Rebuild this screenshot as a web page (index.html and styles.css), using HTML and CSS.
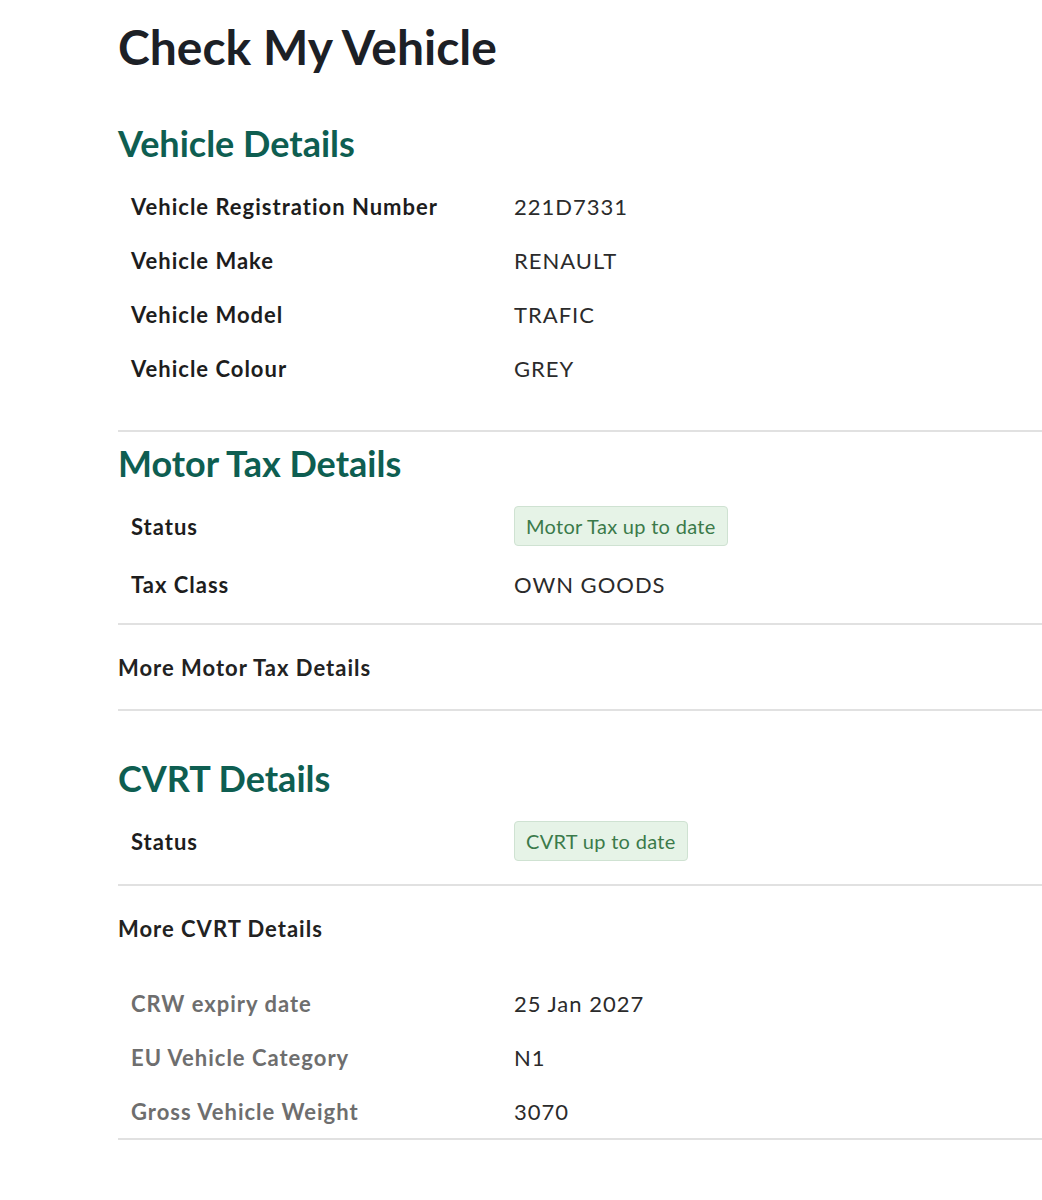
FILE: index.html
```html
<!DOCTYPE html>
<html lang="en">
<head>
  <meta charset="UTF-8">
  <meta name="viewport" content="width=device-width, initial-scale=1.0">
  <title>Check My Vehicle</title>

  <link rel="stylesheet" href="styles.css">
</head>
<body>
  <main class="page">
    <h1 class="page-title">Check My Vehicle</h1>

    <!-- 車両情報 -->
    <section class="section">
      <h2 class="section-title first">Vehicle Details</h2>
      <div class="detail-list vehicle-list">
        <div class="detail-row"><span class="label">Vehicle Registration Number</span><span class="value">221D7331</span></div>
        <div class="detail-row"><span class="label">Vehicle Make</span><span class="value">RENAULT</span></div>
        <div class="detail-row"><span class="label">Vehicle Model</span><span class="value">TRAFIC</span></div>
        <div class="detail-row"><span class="label">Vehicle Colour</span><span class="value">GREY</span></div>
      </div>
    </section>

    <div class="separator"></div>

    <!-- 自動車税 -->
    <section class="section">
      <h2 class="section-title">Motor Tax Details</h2>
      <div class="detail-list">
        <div class="detail-row status-row"><span class="label">Status</span><span class="value"><span class="badge">Motor Tax up to date</span></span></div>
        <div class="detail-row"><span class="label">Tax Class</span><span class="value">OWN GOODS</span></div>
      </div>
    </section>

    <div class="separator spaced"></div>
    <div class="more-toggle">More Motor Tax Details</div>
    <div class="separator"></div>

    <!-- CVRT -->
    <section class="section">
      <h2 class="section-title cvrt-title">CVRT Details</h2>
      <div class="detail-list">
        <div class="detail-row status-row"><span class="label">Status</span><span class="value"><span class="badge">CVRT up to date</span></span></div>
      </div>
    </section>

    <div class="separator spaced"></div>
    <div class="more-toggle">More CVRT Details</div>

    <div class="detail-list more-list">
      <div class="detail-row"><span class="label muted">CRW expiry date</span><span class="value">25 Jan 2027</span></div>
      <div class="detail-row"><span class="label muted">EU Vehicle Category</span><span class="value">N1</span></div>
      <div class="detail-row"><span class="label muted">Gross Vehicle Weight</span><span class="value">3070</span></div>
    </div>
    <div class="separator"></div>
  </main>
</body>
</html>
```

FILE: styles.css
```css
* {
  margin: 0;
  padding: 0;
  box-sizing: border-box;
}

body {
  font-family: Lato, "Open Sans", sans-serif;
  background-color: #ffffff;
  color: #1d1d1d;
  overflow-x: hidden;
}

.page {
  padding: 18px 0 60px 118px; /* 左の余白 */
}

.page-title {
  font-size: 48px;
  font-weight: 700;
  line-height: 58px;
  color: #1c2026;
}

.section-title {
  font-size: 36px;
  font-weight: 700;
  line-height: 44px;
  color: #0e5e51;
  margin-top: 9px;
}

.section-title.first {
  margin-top: 45px;
}

.section-title.cvrt-title {
  margin-top: 45px;
}

.detail-list {
  margin-top: 10px;
}

.vehicle-list {
  margin-top: 14px;
  margin-bottom: 35px;
}

.detail-row {
  display: grid;
  grid-template-columns: 396px 1fr;
  align-items: center;
  height: 54px;
  font-size: 22px;
  letter-spacing: 1px;
}

.status-row {
  height: 62px;
}

.label {
  padding-left: 13px;
  font-weight: 700;
  color: #1d1d1d;
}

.label.muted {
  color: #6e6e6e;
}

.value {
  color: #2b2b2b;
}

.badge {
  display: inline-block;
  padding: 0 11px;
  height: 40px;
  line-height: 39px;
  font-size: 20px;
  letter-spacing: 0.3px;
  color: #3b7a4a;
  background-color: #e6f3e7;
  border: 1px solid #cfe2d2;
  border-radius: 4px;
}

.separator {
  height: 2px;
  background-color: #e1e1e1;
}

/* セクション直後の線は少し離す */
.separator.spaced {
  margin-top: 12px;
}

.more-toggle {
  height: 84px;
  display: flex;
  align-items: center;
  font-size: 22px;
  font-weight: 700;
  letter-spacing: 1px;
  color: #222222;
}

.more-list {
  margin-top: 6px;
}
```
